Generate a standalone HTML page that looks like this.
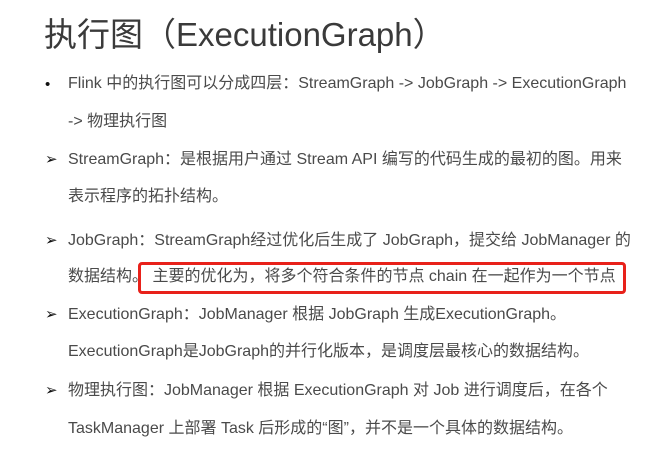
<!DOCTYPE html>
<html><head><meta charset="utf-8"><style>
body{margin:0;width:667px;height:450px;background:#fff;position:relative;overflow:hidden;font-family:"Liberation Sans","Noto Sans CJK SC",sans-serif;color:#4a4a4a}
.t{position:absolute;left:44px;top:8px;font-size:33px;color:#3a3a3a;white-space:nowrap}
.l{position:absolute;left:68px;font-size:16px;white-space:nowrap;line-height:20px}
.b{position:absolute;left:45px;font-size:15px;color:#111;line-height:20px}
.box{position:absolute;left:138px;top:262px;width:482px;height:26px;border:3px solid #e8211a;border-radius:4px}
</style></head><body>
<div class="t">执行图（ExecutionGraph）</div>
<div class="b" style="top:75px">•</div>
<div class="l" style="top:74px">Flink 中的执行图可以分成四层：StreamGraph -&gt; JobGraph -&gt; ExecutionGraph</div>
<div class="l" style="top:112px">-&gt; 物理执行图</div>
<div class="b" style="top:150px">➢</div>
<div class="l" style="top:150px">StreamGraph：是根据用户通过 Stream API 编写的代码生成的最初的图。用来</div>
<div class="l" style="top:187px">表示程序的拓扑结构。</div>
<div class="b" style="top:231px">➢</div>
<div class="l" style="top:231px">JobGraph：StreamGraph经过优化后生成了 JobGraph，提交给 JobManager 的</div>
<div class="l" style="top:267px">数据结构。 主要的优化为，将多个符合条件的节点 chain 在一起作为一个节点</div>
<div class="box"></div>
<div class="b" style="top:305px">➢</div>
<div class="l" style="top:305px">ExecutionGraph：JobManager 根据 JobGraph 生成ExecutionGraph。</div>
<div class="l" style="top:342px">ExecutionGraph是JobGraph的并行化版本，是调度层最核心的数据结构。</div>
<div class="b" style="top:381px">➢</div>
<div class="l" style="top:381px">物理执行图：JobManager 根据 ExecutionGraph 对 Job 进行调度后，在各个</div>
<div class="l" style="top:419px">TaskManager 上部署 Task 后形成的“图”，并不是一个具体的数据结构。</div>
</body></html>
